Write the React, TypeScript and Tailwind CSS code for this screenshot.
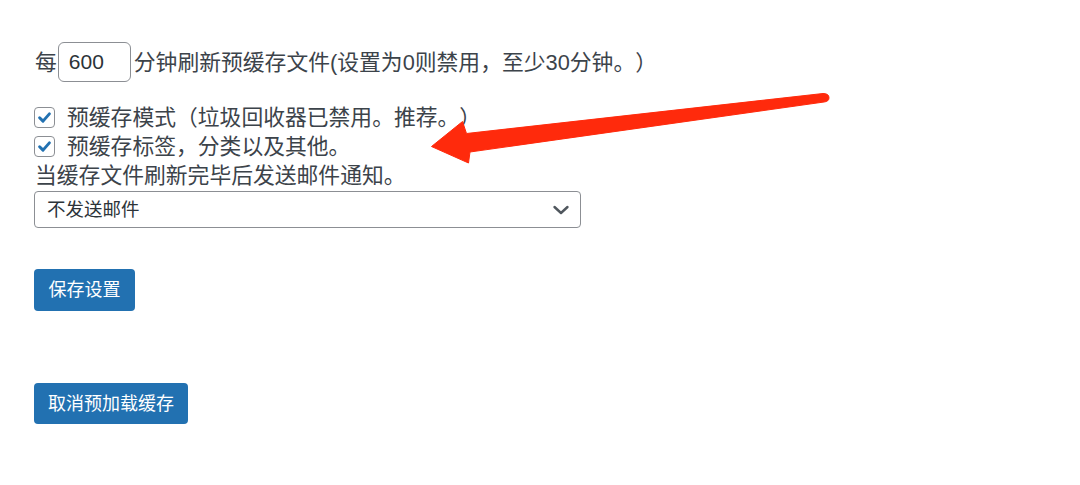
import React from "react";

const fontStack = "font-['Liberation_Sans','Noto_Sans_CJK_SC',sans-serif]";

const CheckRow: React.FC<{ label: string }> = ({ label }) => (
  <div className="flex items-center h-[29px]">
    <span className="flex items-center justify-center w-[21px] h-[21px] rounded-[4px] border border-[#8c8f94] bg-white">
      <svg width="17" height="17" viewBox="0 0 16 16" fill="none">
        <path
          d="M3.4 8.2 L6.6 11.4 L12.6 4.6"
          stroke="#2271b1"
          strokeWidth="2.8"
          strokeLinecap="round"
          strokeLinejoin="round"
        />
      </svg>
    </span>
    <span className="ml-[12px]">{label}</span>
  </div>
);

const App: React.FC = () => {
  return (
    <div
      className={`relative w-[1080px] h-[485px] bg-white text-[#3c434a] ${fontStack} [text-spacing-trim:space-all] overflow-hidden`}
    >
      <div className="pl-[34px] pt-[42px] text-[21.8px] leading-[29px]">
        {/* refresh interval */}
        <div className="flex items-center h-[40px]">
          <span className="ml-[1px]">每</span>
          <input
            defaultValue="600"
            className={`ml-[1px] w-[73px] h-[40px] rounded-[6px] border border-[#8c8f94] px-[10px] text-[21px] text-[#2c3338] outline-none ${fontStack}`}
          />
          <span className="ml-[3px]">
            分钟刷新预缓存文件(设置为0则禁用，至少30分钟。）
          </span>
        </div>

        <div className="mt-[21px]">
          <CheckRow label="预缓存模式（垃圾回收器已禁用。推荐。）" />
          <CheckRow label="预缓存标签，分类以及其他。" />
          <div className="ml-[1px]">当缓存文件刷新完毕后发送邮件通知。</div>
        </div>

        {/* mail select */}
        <div className="mt-[1px] flex items-center justify-between w-[547px] h-[37px] rounded-[4px] border border-[#8c8f94] pl-[12px] pr-[10px] text-[18.5px] text-[#2c3338]">
          <span>不发送邮件</span>
          <svg width="18" height="12" viewBox="0 0 18 12" fill="none">
            <path
              d="M2.5 3 L9 9 L15.5 3"
              stroke="#50575e"
              strokeWidth="2.4"
              strokeLinecap="round"
              strokeLinejoin="round"
            />
          </svg>
        </div>

        <button className="mt-[41px] block w-[101px] h-[42px] rounded-[4px] bg-[#2271b1] text-white text-[18px] leading-none">
          保存设置
        </button>

        <button className="mt-[72px] block w-[154px] h-[41px] rounded-[4px] bg-[#2271b1] text-white text-[18px] leading-none">
          取消预加载缓存
        </button>
      </div>

      {/* annotation arrow */}
      <svg
        className="absolute left-0 top-0 pointer-events-none"
        width="1080"
        height="485"
        viewBox="0 0 1080 485"
      >
        <path
          d="M431.5 146.5 L462.5 121.5 L466.5 133.5 L823 93.5 Q829 93.5 829 97.8 Q829 101.5 824 102 L470 152 L468.5 163 Z"
          fill="#ff2a0c"
          stroke="#ff2a0c"
          strokeWidth="1"
          strokeLinejoin="round"
        />
      </svg>
    </div>
  );
};

export default App;
